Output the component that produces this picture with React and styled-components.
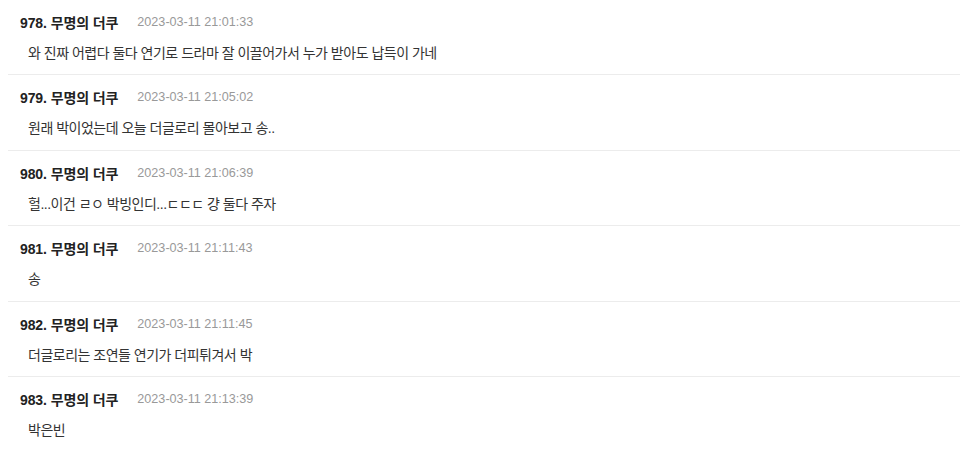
import React from "react";
import styled, { createGlobalStyle } from "styled-components";

const comments = [
  { no: 978, name: "무명의 더쿠", date: "2023-03-11 21:01:33", text: "와 진짜 어렵다 둘다 연기로 드라마 잘 이끌어가서 누가 받아도 납득이 가네" },
  { no: 979, name: "무명의 더쿠", date: "2023-03-11 21:05:02", text: "원래 박이었는데 오늘 더글로리 몰아보고 송.." },
  { no: 980, name: "무명의 더쿠", date: "2023-03-11 21:06:39", text: "헐...이건 ㄹㅇ 박빙인디...ㄷㄷㄷ 걍 둘다 주자" },
  { no: 981, name: "무명의 더쿠", date: "2023-03-11 21:11:43", text: "송" },
  { no: 982, name: "무명의 더쿠", date: "2023-03-11 21:11:45", text: "더글로리는 조연들 연기가 더피튀겨서 박" },
  { no: 983, name: "무명의 더쿠", date: "2023-03-11 21:13:39", text: "박은빈" },
];

const GlobalStyle = createGlobalStyle`
  body {
    margin: 0;
    background: #fff;
    font-family: "Liberation Sans", "Noto Sans CJK KR", sans-serif;
  }
`;

function App() {
  return (
    <>
      <GlobalStyle />
      <CommentList>
        {comments.map((c) => (
          <CommentItem key={c.no}>
            <CommentHead>
              <Author>
                {c.no}. {c.name}
              </Author>
              <DateText>{c.date}</DateText>
            </CommentHead>
            <Body>{c.text}</Body>
          </CommentItem>
        ))}
      </CommentList>
    </>
  );
}

const CommentList = styled.ul`
  list-style: none;
  margin: 0 0 0 8px;
  padding: 0;
`;

const CommentItem = styled.li`
  display: flex;
  flex-direction: column;
  gap: 11px;
  padding: 12px 0 11.4px 12px;
  border-bottom: 1px solid #ececec;
`;

const CommentHead = styled.div`
  display: flex;
  align-items: center;
  gap: 19px;
  height: 20px;
`;

const Author = styled.strong`
  font-size: 14px;
  font-weight: 700;
  color: #222;
  letter-spacing: -0.1px;
`;

const DateText = styled.span`
  font-size: 12.6px;
  color: #999;
`;

const Body = styled.p`
  margin: 0 0 0 8px;
  font-size: 14px;
  line-height: 20px;
  color: #333;
  letter-spacing: -0.5px;
`;

export default App;
